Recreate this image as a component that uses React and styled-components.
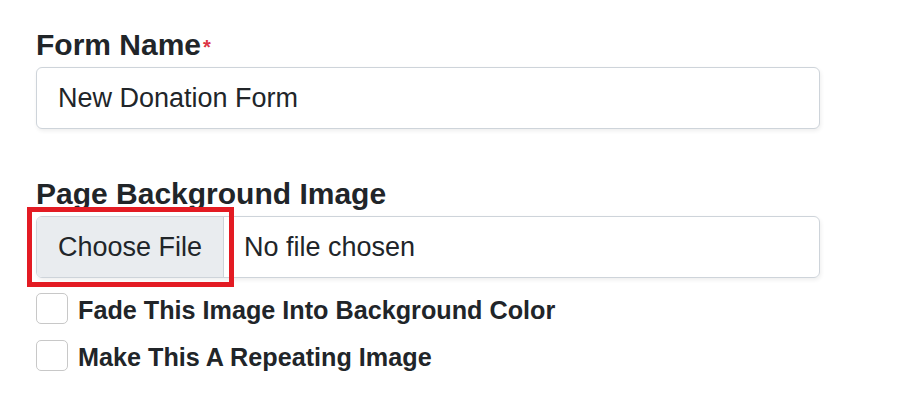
import React from 'react'
import styled, { createGlobalStyle } from 'styled-components'

const Global = createGlobalStyle`
  body {
    margin: 0;
    background: #fff;
    font-family: "Liberation Sans", Arial, sans-serif;
    color: #212529;
  }
`

export default function App() {
  return (
    <Form>
      <Global />
      <Group>
        <Label>Form Name<Req>*</Req></Label>
        <TextInput defaultValue="New Donation Form" />
      </Group>
      <Group $last>
        <Label>Page Background Image</Label>
        <FileField>
          <Highlight>
            <ChooseButton type="button">Choose File</ChooseButton>
          </Highlight>
          <FileName>No file chosen</FileName>
        </FileField>
      </Group>
      <Checks>
        <CheckRow>
          <Box type="checkbox" />
          <CheckText>Fade This Image Into Background Color</CheckText>
        </CheckRow>
        <CheckRow>
          <Box type="checkbox" />
          <CheckText>Make This A Repeating Image</CheckText>
        </CheckRow>
      </Checks>
    </Form>
  )
}

const Form = styled.div`
  width: 784px;
  padding: 27px 0 0 36px;
`

const Group = styled.div`
  margin-bottom: ${(p) => (p.$last ? '15px' : '47px')};
`

const Label = styled.div`
  font-size: 30px;
  font-weight: 700;
  line-height: 35px;
  margin-bottom: 5px;
`

const Req = styled.span`
  color: #dc3545;
  font-size: 20px;
  vertical-align: top;
  position: relative;
  top: 3px;
  margin-left: 2px;
`

const TextInput = styled.input`
  box-sizing: border-box;
  display: block;
  width: 100%;
  height: 62px;
  padding: 0 21px;
  border: 1px solid #ced4da;
  border-radius: 6px;
  box-shadow: 1px 2px 4px rgba(0, 0, 0, 0.07);
  font-family: inherit;
  font-size: 27px;
  color: #212529;
  outline: none;
`

const FileField = styled.div`
  box-sizing: border-box;
  display: flex;
  align-items: stretch;
  height: 62px;
  border: 1px solid #ced4da;
  border-radius: 6px;
  box-shadow: 1px 2px 4px rgba(0, 0, 0, 0.07);
`

/* red annotation frame drawn over the button */
const Highlight = styled.span`
  position: relative;
  display: flex;

  &::after {
    content: '';
    position: absolute;
    inset: -10px;
    border: 5px solid #e31b23;
    pointer-events: none;
  }
`

const ChooseButton = styled.button`
  width: 187px;
  padding: 0;
  border: none;
  border-right: 1px solid #ced4da;
  border-radius: 5px 0 0 5px;
  background: #e9ecef;
  font-family: inherit;
  font-size: 27px;
  color: #212529;
`

const FileName = styled.span`
  display: flex;
  align-items: center;
  padding-left: 20px;
  font-size: 27px;
`

const Checks = styled.div`
  display: flex;
  flex-direction: column;
  gap: 16px;
`

const CheckRow = styled.label`
  display: flex;
  align-items: center;
  gap: 10px;
  height: 31px;
`

const CheckText = styled.span`
  font-size: 25.2px;
  font-weight: 700;
  line-height: 31px;
  position: relative;
  top: 2px;
`

const Box = styled.input`
  appearance: none;
  box-sizing: border-box;
  width: 32px;
  height: 31px;
  margin: 0;
  border: 1px solid #c8c8c8;
  border-radius: 5px;
  background: #fff;
`
